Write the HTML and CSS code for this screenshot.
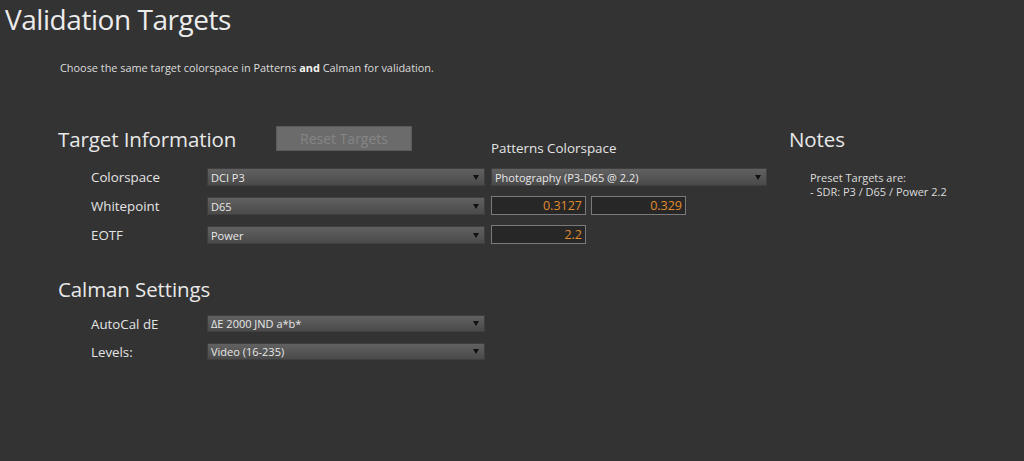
FILE: index.html
```html
<!DOCTYPE html>
<html>
<head>
<meta charset="utf-8">
<link rel="stylesheet" href="styles.css">
</head>
<body>
<h1 class="title">Validation Targets</h1>
<p class="intro">Choose the same target colorspace in Patterns <b>and</b> Calman for validation.</p>

<section class="target">
  <div class="head-row">
    <h2 class="section-title">Target Information</h2>
    <button class="reset" disabled>Reset Targets</button>
  </div>
  <div class="pat-head">Patterns Colorspace</div>
  <h2 class="section-title notes-title">Notes</h2>

  <div class="label">Colorspace</div>
  <div class="select"><span>DCI P3</span><i class="arrow"></i></div>
  <div class="select"><span>Photography (P3-D65 @ 2.2)</span><i class="arrow"></i></div>
  <div class="notes">Preset Targets are:<br>- SDR: P3 / D65 / Power 2.2</div>

  <div class="label">Whitepoint</div>
  <div class="select"><span>D65</span><i class="arrow"></i></div>
  <div class="pair"><div class="num">0.3127</div><div class="num">0.329</div></div>

  <div class="label">EOTF</div>
  <div class="select"><span>Power</span><i class="arrow"></i></div>
  <div class="pair"><div class="num">2.2</div></div>
</section>

<section class="calman">
  <h2 class="section-title cal-title">Calman Settings</h2>
  <div class="label">AutoCal dE</div>
  <div class="select"><span>ΔE 2000 JND a*b*</span><i class="arrow"></i></div>
  <div class="label">Levels:</div>
  <div class="select"><span>Video (16-235)</span><i class="arrow"></i></div>
</section>
</body>
</html>
```

FILE: styles.css
```css
html, body {
  margin: 0;
  padding: 0;
  background: #333333;
  height: 100%;
}
body {
  font-family: "Open Sans", "Noto Sans", sans-serif;
  color: #e6e6e6;
  overflow: hidden;
}
.title {
  margin: 0;
  padding: 0 0 0 5px;
  font-weight: 400;
  font-size: 28px;
  line-height: 38px;
  letter-spacing: -0.45px;
  color: #ececec;
}
.intro {
  margin: 22px 0 0 60px;
  font-size: 10.9px;
  line-height: 16px;
  color: #dcdcdc;
}
.intro b { font-weight: 700; color: #f2f2f2; }

.target {
  display: grid;
  grid-template-columns: 143px 278px 276px 1fr;
  column-gap: 6px;
  grid-template-rows: 42px 18px 18px 18px;
  row-gap: 11px;
  margin: 39px 0 0 58px;
}
.head-row {
  grid-column: 1 / span 2;
  display: flex;
  align-items: center;
  padding-top: 5px;
}
.section-title {
  margin: 0;
  font-weight: 400;
  font-size: 20.5px;
  line-height: 26px;
  color: #e8e8e8;
  letter-spacing: -0.1px;
}
.head-row .section-title { width: 218px; }
.reset {
  width: 136px;
  height: 25px;
  background: #6b6b6b;
  border: 1px solid #5a5a5a;
  color: #858585;
  font-family: inherit;
  font-size: 14px;
  padding: 0;
}
.pat-head {
  align-self: end;
  font-size: 13.4px;
  line-height: 18px;
  color: #e4e4e4;
}
.notes-title {
  padding-left: 16px;
  padding-top: 5px;
  align-self: center;
}
.label {
  padding-left: 33px;
  font-size: 13.3px;
  line-height: 18px;
  color: #e4e4e4;
}
.select {
  display: flex;
  align-items: center;
  justify-content: space-between;
  height: 18px;
  box-sizing: border-box;
  border: 1px solid #3f3f3f;
  background: linear-gradient(#616161, #4a4a4a);
  padding: 0 5px 0 3px;
  font-size: 11px;
  color: #e8e8e8;
}
.select span { line-height: 16px; padding-top: 1px; }
.arrow {
  width: 0;
  height: 0;
  border-left: 3.5px solid transparent;
  border-right: 3.5px solid transparent;
  border-top: 5px solid #111;
}
.notes {
  grid-row: 2 / span 3;
  grid-column: 4;
  padding-left: 37px;
  padding-top: 3px;
  font-size: 11px;
  line-height: 14px;
  color: #dcdcdc;
}
.pair {
  display: flex;
  gap: 5px;
  align-items: stretch;
  margin-top: -1px;
  height: 19px;
}
.num {
  width: 95px;
  box-sizing: border-box;
  background: #272727;
  border: 1px solid #7a7a7a;
  color: #e28b2b;
  text-align: right;
  font-size: 12.5px;
  line-height: 17px;
  padding-right: 3px;
}
.calman {
  display: grid;
  grid-template-columns: 149px 278px;
  grid-template-rows: 30px 17px 17px;
  row-gap: 11px;
  margin: 30px 0 0 58px;
}
.cal-title {
  grid-column: 1 / span 2;
  line-height: 30px;
}
.calman .select { height: 17px; }
```
